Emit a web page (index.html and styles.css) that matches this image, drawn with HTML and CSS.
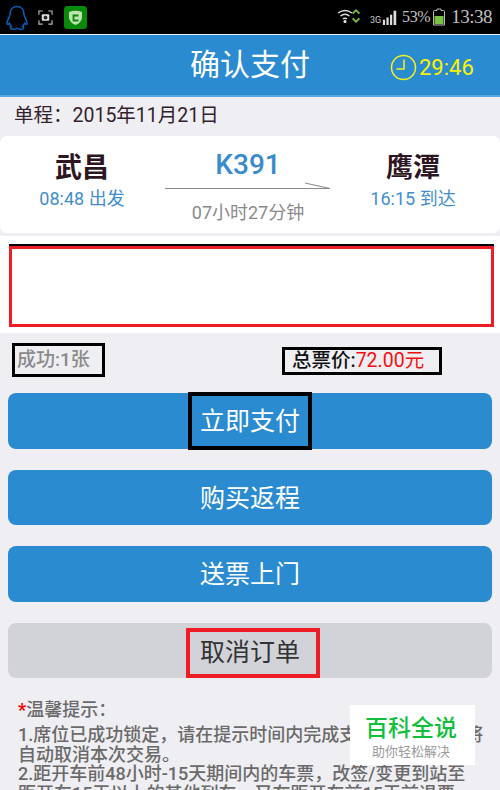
FILE: index.html
```html
<!DOCTYPE html>
<html lang="zh">
<head>
<meta charset="utf-8">
<title>确认支付</title>
<link rel="stylesheet" href="styles.css">
</head>
<body>
<div class="page">
  <div class="status">
    <div class="status-left">
      <svg class="ic-qq" width="24" height="26" viewBox="0 0 24 26"><path d="M12 1.500C7 1.500 5 5.500 5 9.500c0 2-2.500 5-3 8-.3 2 .8 2.500 2.500 .8.500 1.500 1.200 2.500 2 3.200-1.500 .7-1.800 2.500 1 2.800 2 .2 3.500-.5 4.500-1 1 .5 2.500 1.200 4.500 1 2.800-.3 2.500-2.100 1-2.800.8-.7 1.500-1.700 2-3.200 1.700 1.700 2.800 1.200 2.500-.8-.5-3-3-6-3-8 0-4-2-8-7-8z" fill="none" stroke="#0b5fc0" stroke-width="1.500"/></svg>
      <svg class="ic-shot" width="15" height="15" viewBox="0 0 16 16"><path d="M1 5V1h4M11 1h4v4M15 11v4h-4M5 15H1v-4" fill="none" stroke="#bbb" stroke-width="1.200"/><rect x="4" y="4.500" width="8" height="7" rx="1" fill="#ddd"/><circle cx="8" cy="8" r="2" fill="#222"/></svg>
      <svg class="ic-app" width="23" height="23" viewBox="0 0 23 23"><rect width="23" height="23" rx="3.500" fill="#0a8a0a"/><path d="M5 6q6.500-2.500 13 0v6q-1 5-6.500 7Q6 17 5 12z" fill="#bfe3b0"/><path d="M14.500 9.500h-5v5h5" fill="none" stroke="#0a8a0a" stroke-width="1.800"/></svg>
    </div>
    <div class="status-right">
      <svg class="ic-wifi" width="24" height="16" viewBox="0 0 24 16"><path d="M1 5q7-5 14 0M3.500 8q4.500-3.500 9 0M6 11q2-1.500 4 0" fill="none" stroke="#ddd" stroke-width="1.500"/><circle cx="8" cy="13.500" r="1.500" fill="#eee"/><path d="M19 1l4 4-1.200 1.200L19 3.500 16.200 6.200 15 5zM19 15l4-4-1.200-1.200L19 12.500l-2.800-2.700L15 11z" fill="#7ac143"/></svg>
      <span class="net">3G</span>
      <svg class="ic-signal" width="16" height="17" viewBox="0 0 18 17"><path d="M1 11h2.500v6H1zM5 8.500h2.500V17H5zM9 5.500h2.500V17H9zM13 1h3v16h-3z" fill="#ddd"/></svg>
      <span class="pct">53%</span>
      <svg class="ic-batt" width="12" height="18" viewBox="0 0 12 18"><path d="M4 1h4v1.500h2.500q1 0 1 1V17H.5V3.500q0-1 1-1H4z" fill="none" stroke="#bbb"/><rect x="1.500" y="8" width="9" height="8" fill="#7ac143"/></svg>
      <span class="clock">13:38</span>
    </div>
  </div>

  <header class="topbar">
    <h1 class="title">确认支付</h1>
    <div class="timer">
      <svg width="27" height="27" viewBox="0 0 27 27"><circle cx="13.500" cy="13.500" r="12" fill="none" stroke="#f4f020" stroke-width="1.500"/><path d="M14 5.500V15H6.500" fill="none" stroke="#f4f020" stroke-width="1.500"/></svg>
      <span>29:46</span>
    </div>
  </header>

  <div class="trip-date">单程：2015年11月21日</div>

  <section class="card">
    <div class="stn">
      <div class="city">武昌</div>
      <div class="time">08:48 出发</div>
    </div>
    <div class="mid">
      <div class="train">K391</div>
      <svg class="arrow" width="166" height="8" viewBox="0 0 166 8"><path d="M0 6.500H165L140 1" fill="none" stroke="#8a8a8a" stroke-width="1"/></svg>
      <div class="dur">07小时27分钟</div>
    </div>
    <div class="stn">
      <div class="city">鹰潭</div>
      <div class="time">16:15 到达</div>
    </div>
  </section>

  <section class="band"><div class="redact"></div></section>

  <div class="summary">
    <div class="count">成功:1张</div>
    <div class="total">总票价:<em class="price">72.00元</em></div>
  </div>

  <div class="actions">
    <div class="btn"><span class="mark mark-black">立即支付</span></div>
    <div class="btn">购买返程</div>
    <div class="btn">送票上门</div>
    <div class="btn btn-grey"><span class="mark mark-red">取消订单</span></div>
  </div>

  <section class="tips">
    <div class="tips-head"><span class="star">*</span>温馨提示：</div>
    <p>1.席位已成功锁定，请在提示时间内完成支付，否则系统将<br>自动取消本次交易。</p>
    <p>2.距开车前48小时-15天期间内的车票，改签/变更到站至<br>距开车15天以上的其他列车，又在距开车前15天前退票</p>
  </section>

  <div class="watermark">
    <div class="wm-main">百科全说</div>
    <div class="wm-sub">助你轻松解决</div>
  </div>
</div>
</body>
</html>
```
FILE: styles.css
```css
* { box-sizing: border-box; }
html, body { margin: 0; padding: 0; }
body { font-family: Roboto, "Noto Sans CJK SC", sans-serif; background: #efeef3; }
.page { position: relative; width: 500px; height: 790px; overflow: hidden; background: #efeef3; }

.status { height: 34px; background: #000; display: flex; justify-content: space-between; align-items: center; padding: 0 8px 0 5px; }
.status-left { display: flex; align-items: center; gap: 9px; }
.ic-qq { margin-top: 1px; }
.ic-app { margin-left: 2px; }
.status-right { display: flex; align-items: center; color: #c0c0c0; }
.ic-wifi { margin-right: 9px; margin-top: -2px; }
.net { font-size: 9px; color: #ccc; margin-top: 6px; }
.ic-signal { margin-left: 1px; margin-right: 4px; }
.pct { font-family: "Liberation Serif", serif; font-size: 16px; letter-spacing: -.4px; }
.ic-batt { margin: 0 6px 0 3px; }
.clock { font-family: "Liberation Serif", serif; font-size: 19px; letter-spacing: -.5px; }

.topbar { position: relative; height: 62px; margin-top: 1px; background: #2a8bd0; border-bottom: 2px solid #5aa6de; display: flex; justify-content: center; align-items: center; }
.title { margin: 0; font-size: 30px; font-weight: 400; color: #fff; line-height: 1; }
.timer { position: absolute; left: 390px; top: 19px; display: flex; align-items: center; gap: 2px; color: #f8f400; font-size: 22px; }

.trip-date { height: 39px; padding: 7px 0 0 14px; font-size: 19.500px; line-height: 24px; color: #33222c; }

.card { height: 97px; background: #fff; border-radius: 7px; display: grid; grid-template-columns: 165px 166px 1fr; }
.stn { text-align: center; padding-top: 13px; }
.stn:first-child { padding-right: 1px; }
.stn:last-child { padding-right: 5px; }
.city { font-size: 27px; line-height: 38px; font-weight: 700; color: #2e1522; }
.time { font-size: 18px; line-height: 22px; color: #3f8fd0; margin-top: 1px; }
.mid { display: flex; flex-direction: column; align-items: center; }
.train { font-size: 28px; font-weight: 500; line-height: 34px; color: #3a8bcc; margin-top: 12px; }
.arrow { display: block; }
.dur { font-size: 18px; line-height: 24px; color: #8a8a8a; margin-top: 11px; }

.band { height: 97px; margin-top: 3px; background: #fff; padding: 10px 6px 0 9px; }
.redact { height: 81px; border: 3px solid #ee1c25; box-shadow: 0 -2px 0 #000; }

.summary { position: relative; height: 60px; }
.count { position: absolute; left: 12px; top: 10px; width: 93px; height: 34px; border: 3px solid #000; padding-left: 2px; font-size: 19px; line-height: 28px; font-weight: 500; color: #8a8a8a; }
.total { position: absolute; left: 282px; top: 14px; width: 160px; height: 28px; border: 3px solid #000; padding-left: 7px; font-size: 19.500px; line-height: 21px; font-weight: 500; color: #111; white-space: nowrap; }
.price { font-style: normal; font-weight: 400; color: #f50f0f; }

.actions { display: flex; flex-direction: column; gap: 21px; padding: 0 8px; }
.btn { height: 55.500px; padding-bottom: 3px; border-radius: 8px; background: #2a8bd0; color: #fff; font-size: 25px; display: flex; align-items: center; justify-content: center; }
.btn-grey { background: #d2d3d8; color: #333; }
.mark { display: flex; align-items: center; justify-content: center; height: 58px; }
.mark-black { width: 124px; border: 4px solid #000; margin-top: 3px; padding-bottom: 3px; }
.mark-red { width: 134px; height: 50px; border: 4px solid #ee1c25; align-self: flex-end; margin: 0 0 -3px 6px; padding: 0 6px 7px 0; }

.tips { padding: 20px 0 0 18px; color: #6a6a6a; font-size: 18px; font-weight: 500; line-height: 19.500px; white-space: nowrap; }
.tips-head { line-height: 24px; margin-bottom: 3px; }
.star { color: #f00; font-weight: 700; }
.tips p { margin: 0; }

.watermark { position: absolute; left: 350px; top: 705px; width: 125px; height: 60px; padding-right: 3px; background: #fff; text-align: center; }
.wm-main { font-size: 23px; font-weight: 500; line-height: 32px; color: #10c03c; margin-top: 8px; }
.wm-sub { font-size: 13px; line-height: 14px; letter-spacing: 0; color: #9a9a9a; }
```
